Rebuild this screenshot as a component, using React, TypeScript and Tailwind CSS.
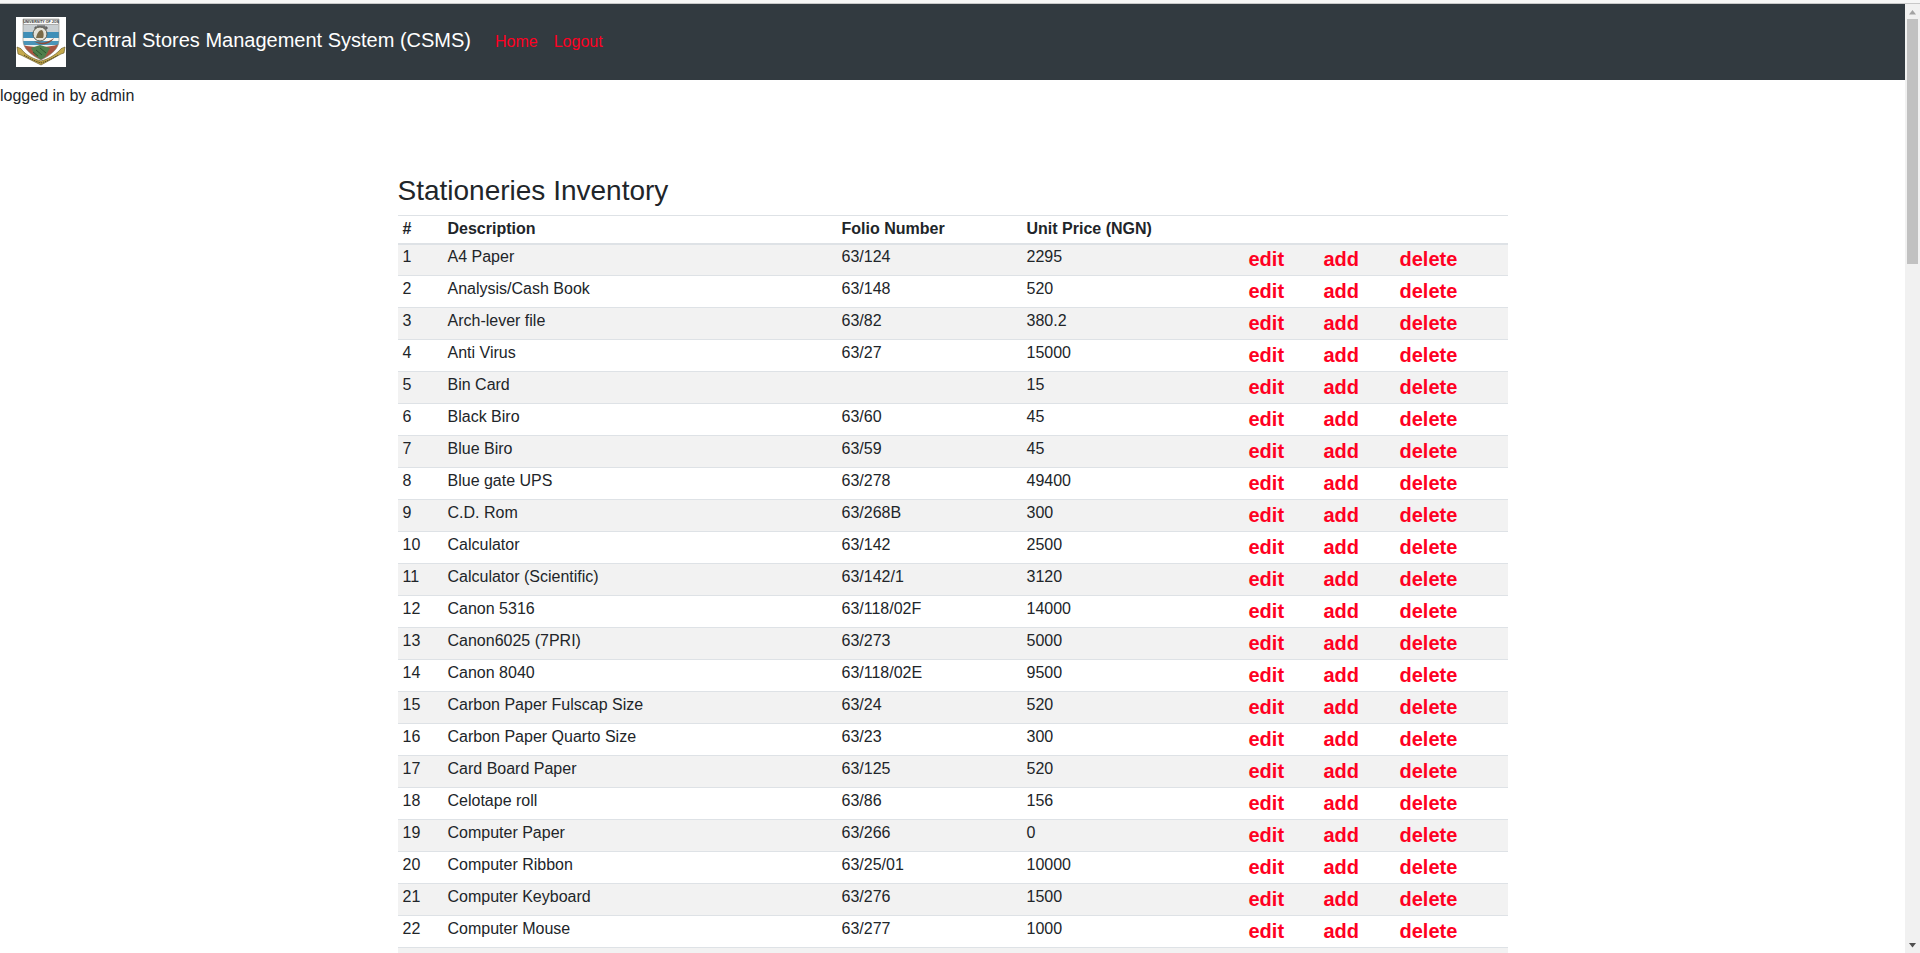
const items: [string, string, string, string][] = [
  ['1', 'A4 Paper', '63/124', '2295'],
  ['2', 'Analysis/Cash Book', '63/148', '520'],
  ['3', 'Arch-lever file', '63/82', '380.2'],
  ['4', 'Anti Virus', '63/27', '15000'],
  ['5', 'Bin Card', '', '15'],
  ['6', 'Black Biro', '63/60', '45'],
  ['7', 'Blue Biro', '63/59', '45'],
  ['8', 'Blue gate UPS', '63/278', '49400'],
  ['9', 'C.D. Rom', '63/268B', '300'],
  ['10', 'Calculator', '63/142', '2500'],
  ['11', 'Calculator (Scientific)', '63/142/1', '3120'],
  ['12', 'Canon 5316', '63/118/02F', '14000'],
  ['13', 'Canon6025 (7PRI)', '63/273', '5000'],
  ['14', 'Canon 8040', '63/118/02E', '9500'],
  ['15', 'Carbon Paper Fulscap Size', '63/24', '520'],
  ['16', 'Carbon Paper Quarto Size', '63/23', '300'],
  ['17', 'Card Board Paper', '63/125', '520'],
  ['18', 'Celotape roll', '63/86', '156'],
  ['19', 'Computer Paper', '63/266', '0'],
  ['20', 'Computer Ribbon', '63/25/01', '10000'],
  ['21', 'Computer Keyboard', '63/276', '1500'],
  ['22', 'Computer Mouse', '63/277', '1000'],
]

function Crest() {
  return (
    <svg width="50" height="50" viewBox="0 0 50 50" className="block shrink-0 bg-white">
      <defs>
        <clipPath id="shield">
          <path d="M7 2h36v21c0 9-8 15-18 20C15 38 7 32 7 23z" />
        </clipPath>
      </defs>
      <g clipPath="url(#shield)">
        <rect x="7" y="2" width="36" height="42" fill="#eef0ee" />
        <rect x="7" y="8" width="36" height="7" fill="#c9cfd2" />
        <rect x="7" y="15" width="36" height="6" fill="#3f8fb8" />
        <rect x="7" y="21" width="36" height="3" fill="#f4f4f0" />
        <rect x="7" y="24" width="36" height="4" fill="#4a94b8" />
        <path d="M7 28c10 3 26 3 36-1v17H7z" fill="#a85440" />
        <path d="M15 31l9-3 10 3-5 9-4 3-6-5z" fill="#4f7f4c" />
        <path d="M20 33l6 5M24 31l6 5M17 35l5 4" stroke="#2f5530" strokeWidth="1" />
      </g>
      <path d="M7 2h36v21c0 9-8 15-18 20C15 38 7 32 7 23z" fill="none" stroke="#8a8a80" strokeWidth="0.6" />
      <rect x="7.500" y="2.500" width="35" height="5" fill="#f8f8f8" stroke="#666" strokeWidth="0.5" />
      <text x="25" y="6.300" textAnchor="middle" fontSize="3.600" fontWeight="700" fill="#333" fontFamily="Liberation Sans, sans-serif">UNIVERSITY OF JOS</text>
      <path d="M19 12h12v-2H19zM21 9h8" stroke="#555" strokeWidth="1" fill="#888" />
      <circle cx="24" cy="17" r="7" fill="#e4e2d8" stroke="#5c5c50" strokeWidth="1" />
      <path d="M20 21c1-5 3-8 6-8 2 2 2 6 1 8z" fill="#7a6a48" />
      <path d="M18 24c6 3 14 2 20-3-3 6-13 9-20 3z" fill="#8b4a38" />
      <path d="M1 30c2 1 4 1 5 3 5 6 12 9 19 11 7-2 13-5 19-11 1-2 3-2 5-3l-1 6-3 1-20 11L5 38l-3-1z" fill="#c4a94c" stroke="#5f5222" strokeWidth="0.6" />
      <path d="M8 38c6 4 11 6 17 8 6-2 11-4 17-8" fill="none" stroke="#4f4622" strokeWidth="1" strokeDasharray="1.500 0.800" />
    </svg>
  )
}

function Scrollbar() {
  return (
    <aside className="flex w-[15px] shrink-0 flex-col items-center bg-[#f1f1f1]">
      <svg width="15" height="15" viewBox="0 0 15 15" className="shrink-0">
        <path d="M4 10.500l3.500-4.500 3.500 4.500z" fill="#a3a3a3" />
      </svg>
      <div className="h-[245px] w-[11px] bg-[#c1c1c1]" />
      <div className="flex-1" />
      <svg width="15" height="15" viewBox="0 0 15 15" className="shrink-0">
        <path d="M4 5l3.500 4.500L11 5z" fill="#505050" />
      </svg>
    </aside>
  )
}

export default function App() {
  return (
    <div className="flex h-screen flex-col overflow-hidden bg-white font-['Liberation_Sans',sans-serif] text-[16px] leading-[24px] text-[#212529]">
      <div className="h-[4px] shrink-0 border-b border-[#c8c8c8] bg-[#f6f6f6]" />
      <div className="flex min-h-0 flex-1">
        <div className="min-w-0 flex-1 overflow-hidden">
          <nav className="flex h-[76px] items-center bg-[#323a40] pl-4">
            <Crest />
            <a className="mb-[4px] ml-[6px] text-[20px] leading-[30px] text-white">Central Stores Management System (CSMS)</a>
            <a className="ml-[24px] text-[#ff0022]">Home</a>
            <a className="ml-[16px] text-[#ff0022]">Logout</a>
          </nav>
          <p className="pt-[4px]">logged in by admin</p>
          <main className="mx-auto mt-[66px] w-[1110px]">
            <h2 className="mb-[7px] text-[28px] leading-[34px]">Stationeries Inventory</h2>
            <table className="w-full border-collapse">
              <thead>
                <tr className="h-[28px] border-t border-b-2 border-[#dee2e6] text-left">
                  <th className="w-[45px] pl-[5px] font-bold">#</th>
                  <th className="w-[394px] pl-[5px] font-bold">Description</th>
                  <th className="w-[185px] pl-[5px] font-bold">Folio Number</th>
                  <th className="w-[220px] pl-[5px] font-bold">Unit Price (NGN)</th>
                  <th className="w-[75px]" />
                  <th className="w-[76px]" />
                  <th />
                </tr>
              </thead>
              <tbody>
                {items.map(([no, description, folio, price], i) => {
                  // first row sits under the thick header border, so it needs no top padding
                  const pad = i === 0 ? 'pt-0' : 'pt-px'
                  return (
                    <tr key={no} className={`h-[32px] border-b border-[#dee2e6] align-top ${i % 2 === 0 ? 'bg-[#f2f2f2]' : 'bg-white'}`}>
                      <td className={`${pad} pl-[5px]`}>{no}</td>
                      <td className={`${pad} pl-[5px]`}>{description}</td>
                      <td className={`${pad} pl-[5px]`}>{folio}</td>
                      <td className={`${pad} pl-[5px]`}>{price}</td>
                      <td className={`${pad} pl-[7px] text-[20px] leading-[28px] font-bold text-[#ff0022]`}>edit</td>
                      <td className={`${pad} pl-[7px] text-[20px] leading-[28px] font-bold text-[#ff0022]`}>add</td>
                      <td className={`${pad} pl-[7px] text-[20px] leading-[28px] font-bold text-[#ff0022]`}>delete</td>
                    </tr>
                  )
                })}
                <tr className="h-[32px] bg-[#f2f2f2]">
                  <td colSpan={7} />
                </tr>
              </tbody>
            </table>
          </main>
        </div>
        <Scrollbar />
      </div>
    </div>
  )
}
